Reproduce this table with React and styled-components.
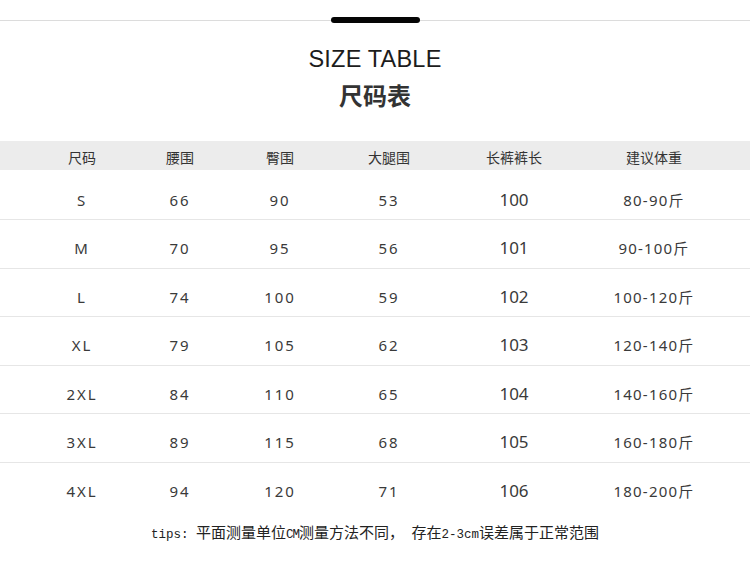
import React from "react";
import styled, { createGlobalStyle } from "styled-components";

const GlobalStyle = createGlobalStyle`
  * { box-sizing: border-box; }
  html, body { margin: 0; padding: 0; background: #ffffff; }
  body {
    font-family: "Noto Sans", "Noto Sans CJK SC", sans-serif;
    color: #333333;
  }
`;

const headers = ["尺码", "腰围", "臀围", "大腿围", "长裤裤长", "建议体重"];

const rows = [
  ["S", "66", "90", "53", "100", "80-90斤"],
  ["M", "70", "95", "56", "101", "90-100斤"],
  ["L", "74", "100", "59", "102", "100-120斤"],
  ["XL", "79", "105", "62", "103", "120-140斤"],
  ["2XL", "84", "110", "65", "104", "140-160斤"],
  ["3XL", "89", "115", "68", "105", "160-180斤"],
  ["4XL", "94", "120", "71", "106", "180-200斤"],
];

export default function App() {
  return (
    <>
      <GlobalStyle />
      <Page>
        <TopRule>
          <Bar />
        </TopRule>
        <Title>SIZE TABLE</Title>
        <SubTitle>尺码表</SubTitle>

        <Table>
          <HeadRow>
            {headers.map((h) => (
              <HeadCell key={h}>{h}</HeadCell>
            ))}
          </HeadRow>
          {rows.map((r, i) => (
            <Row key={r[0]} last={i === rows.length - 1}>
              {r.map((v, j) => (
                <Cell key={j} big={j === 4} tight={j === 5}>
                  {v}
                </Cell>
              ))}
            </Row>
          ))}
        </Table>

        <Tips>
          <Latin>tips: </Latin>平面测量单位<Latin narrow>CM</Latin>测量方法不同，
          <Latin> </Latin>存在<Latin>2-3cm</Latin>误差属于正常范围
        </Tips>
      </Page>
    </>
  );
}

//! ****************** STYLES ******************//

const Page = styled.div`
  width: 750px;
  height: 565px;
  overflow: hidden;
  padding-top: 17px;
  background: #fff;
`;

const TopRule = styled.div`
  display: flex;
  justify-content: center;
  align-items: center;
  height: 6px;
  background: linear-gradient(#dcdcdc, #dcdcdc) center / 100% 1px no-repeat;
`;

const Bar = styled.div`
  width: 89px;
  height: 6px;
  border-radius: 3px;
  background: #050505;
`;

const Title = styled.h1`
  margin: 25px 0 0;
  font-family: "Liberation Sans", Arial, sans-serif;
  font-weight: 400;
  font-size: 23.5px;
  line-height: 23.5px;
  letter-spacing: 0.2px;
  text-align: center;
  color: #1c1c1c;
`;

const SubTitle = styled.h2`
  margin: 11px 0 0;
  font-family: "Noto Sans CJK SC", sans-serif;
  font-weight: 700;
  font-size: 24px;
  line-height: 24px;
  text-align: center;
  color: #333;
`;

const Table = styled.div`
  margin-top: 34.5px;
  display: flex;
  flex-direction: column;
`;

const columns = `
  display: grid;
  grid-template-columns: 104px 92px 108px 110px 140px 140px;
  padding: 0 26px 0 30px;
`;

const HeadRow = styled.div`
  ${columns}
  height: 29px;
  align-items: center;
  background: #ececec;
  margin-bottom: 1.5px;
`;

const HeadCell = styled.div`
  text-align: center;
  font-family: "Noto Sans CJK SC", sans-serif;
  font-size: 14px;
  line-height: 18px;
  color: #333;
  padding-top: 3px;
`;

const Row = styled.div`
  ${columns}
  height: 48.5px;
  align-items: center;
  padding-top: 9px;
  border-bottom: ${(p) => (p.last ? "none" : "1px solid #e6e6e6")};
`;

const Cell = styled.div`
  text-align: center;
  font-family: "Noto Sans", "Noto Sans CJK SC", sans-serif;
  font-size: ${(p) => (p.big ? "17px" : "15px")};
  letter-spacing: ${(p) => (p.big ? "0" : p.tight ? "1.2px" : "2px")};
  line-height: 20px;
  color: #3a3a3a;
`;

const Tips = styled.p`
  margin: 11px 0 0;
  text-align: center;
  font-family: "Noto Sans CJK SC", sans-serif;
  font-size: 15px;
  line-height: 20px;
  color: #222;
  white-space: pre;
`;

const Latin = styled.span`
  font-family: "Liberation Mono", monospace;
  font-size: 12.5px;
  letter-spacing: ${(p) => (p.narrow ? "-1px" : "0")};
`;
